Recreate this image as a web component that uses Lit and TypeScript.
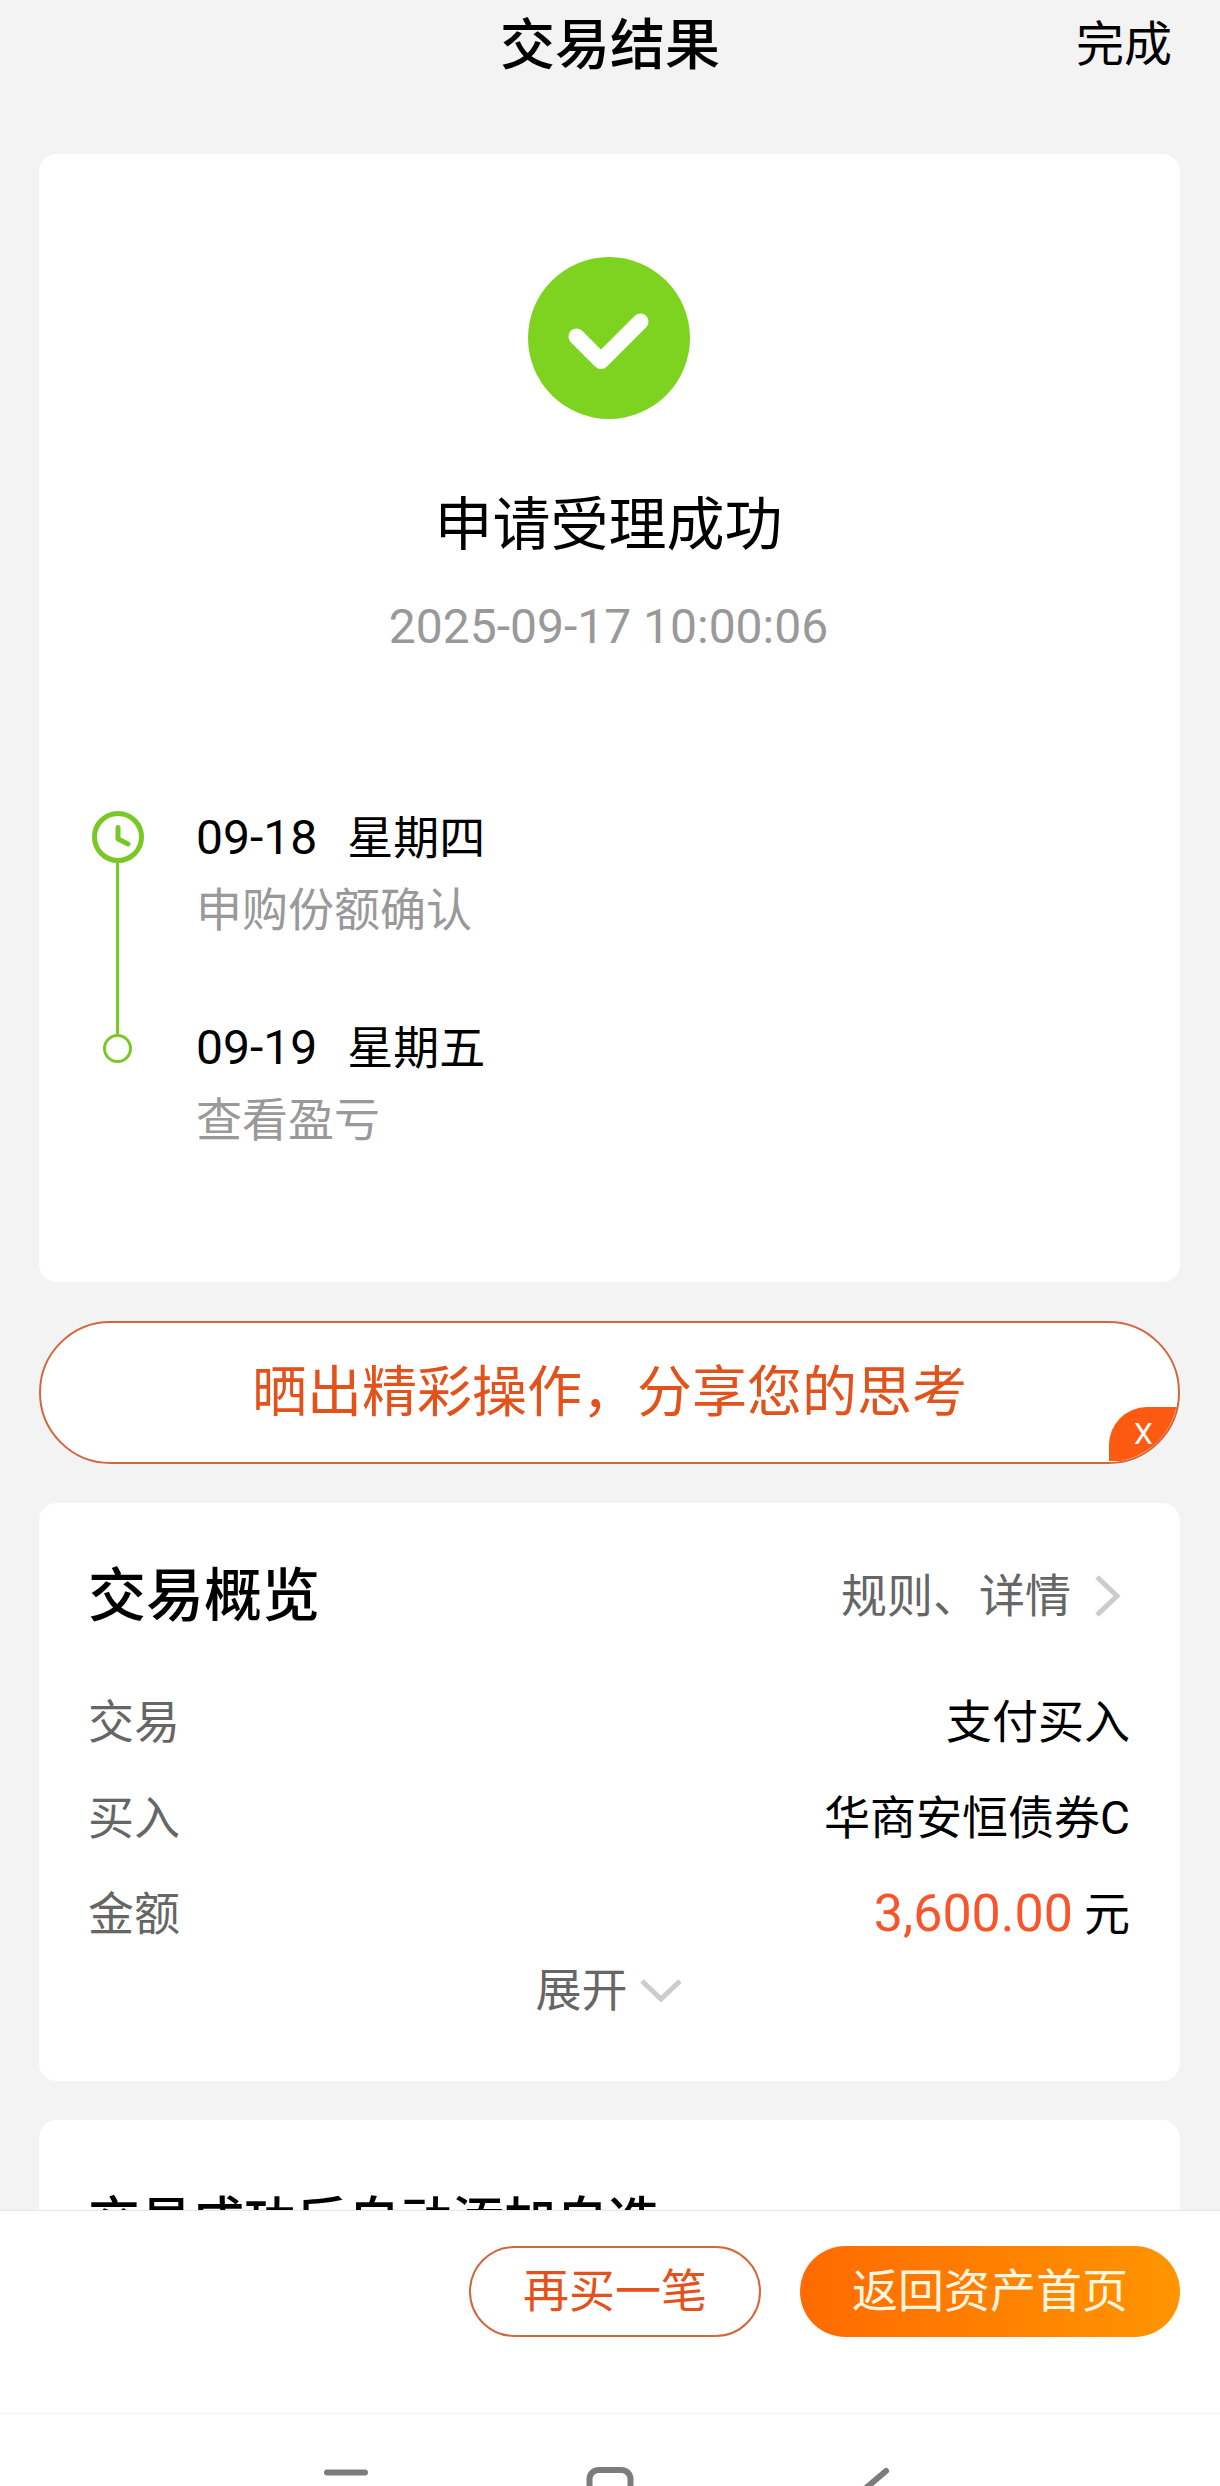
import { LitElement, html, css, svg, nothing } from "lit";
import { customElement, property, state } from "lit/decorators.js";

interface Step {
  date: string;
  weekday: string;
  note: string;
}

const STEPS: Step[] = [
  { date: "09-18", weekday: "星期四", note: "申购份额确认" },
  { date: "09-19", weekday: "星期五", note: "查看盈亏" },
];

const baseStyles = css`
  * {
    box-sizing: border-box;
    margin: 0;
    padding: 0;
  }
  button,
  a {
    font: inherit;
    color: inherit;
    background: none;
    border: none;
    text-decoration: none;
    white-space: nowrap;
    cursor: pointer;
  }
  svg {
    display: block;
    flex: none;
  }
`;

@customElement("progress-timeline")
export class ProgressTimeline extends LitElement {
  @property({ attribute: false }) steps: Step[] = [];

  static styles = [
    baseStyles,
    css`
      :host {
        display: block;
      }
      .list {
        list-style: none;
      }
      .step {
        display: grid;
        grid-template-columns: 57px 1fr;
        column-gap: 50px;
      }
      .rail {
        display: flex;
        flex-direction: column;
        align-items: center;
      }
      .rail.first {
        padding-top: 9px;
      }
      .line {
        flex: 1;
        width: 3px;
        background: #78c826;
      }
      .lead {
        flex: none;
        height: 22px;
        width: 3px;
        background: #78c826;
      }
      .text {
        padding-bottom: 66px;
        line-height: 72px;
      }
      .step:last-child .text {
        padding-bottom: 0;
      }
      .when {
        display: flex;
        gap: 30px;
        color: #000;
      }
      .date {
        font-size: 48px;
      }
      .note {
        color: #999;
      }
    `,
  ];

  private clock() {
    return html`<svg width="52" height="52" viewBox="0 0 52 52" aria-hidden="true">
      <circle cx="26" cy="26" r="23.5" fill="none" stroke="#78c826" stroke-width="5" />
      <path
        d="M26 16.500V28L36 33"
        fill="none"
        stroke="#78c826"
        stroke-width="5"
        stroke-linecap="round"
        stroke-linejoin="round"
      />
    </svg>`;
  }

  private dot() {
    return html`<svg width="29" height="29" viewBox="0 0 29 29" aria-hidden="true">
      <circle cx="14.5" cy="14.5" r="13" fill="none" stroke="#78c826" stroke-width="3" />
    </svg>`;
  }

  render() {
    const last = this.steps.length - 1;
    return html`<ol class="list">
      ${this.steps.map(
        (s, i) => html`<li class="step">
          <div class="rail ${i === 0 ? "first" : ""}">
            ${i === 0 ? this.clock() : html`<span class="lead"></span>${this.dot()}`}
            ${i < last ? html`<span class="line"></span>` : nothing}
          </div>
          <div class="text">
            <p class="when"><span class="date">${s.date}</span><span>${s.weekday}</span></p>
            <p class="note">${s.note}</p>
          </div>
        </li>`
      )}
    </ol>`;
  }
}

@customElement("share-banner")
export class ShareBanner extends LitElement {
  static styles = [
    baseStyles,
    css`
      :host {
        display: block;
      }
      .pill {
        position: relative;
        overflow: hidden;
        border: 2px solid #d0683c;
        border-radius: 72px;
        background: #fff;
      }
      .share {
        display: block;
        width: 100%;
        padding: 33px 72px;
        font-size: 55px;
        line-height: 73px;
        color: #e4521b;
      }
      .close {
        position: absolute;
        right: 0;
        bottom: 1px;
        width: 69px;
        height: 54px;
        border-radius: 38px 0 0 0;
        background: #fb5a10;
        color: #fff;
        font-size: 30px;
        line-height: 54px;
        text-align: center;
      }
    `,
  ];

  render() {
    return html`<div class="pill">
      <button class="share" type="button">晒出精彩操作，分享您的思考</button>
      <button class="close" type="button">X</button>
    </div>`;
  }
}

@customElement("app-root")
export class AppRoot extends LitElement {
  @state() private steps = STEPS;

  static styles = [
    baseStyles,
    css`
      :host {
        display: flex;
        flex-direction: column;
        height: 100vh;
        overflow: hidden;
        background: #f3f3f3;
        color: #000;
        font-family: Roboto, "Noto Sans CJK SC", sans-serif;
        font-size: 46px;
        line-height: 60px;
      }
      .scroll {
        flex: 1;
        min-height: 0;
        overflow-y: auto;
        scrollbar-width: none;
      }
      .header {
        display: grid;
        grid-template-columns: 1fr auto 1fr;
        align-items: center;
        padding: 9px 48px 5px;
      }
      .page-title {
        grid-column: 2;
        font-size: 55px;
        font-weight: 500;
        line-height: 72px;
      }
      .done {
        justify-self: end;
        font-size: 48px;
      }
      .main {
        display: flex;
        flex-direction: column;
        gap: 39px;
        padding: 68px 40px 40px 39px;
      }
      .card {
        border-radius: 18px;
        background: #fff;
      }
      .result {
        display: flex;
        flex-direction: column;
        align-items: center;
        padding: 103px 52px 126px 50px;
      }
      .result-title {
        margin-top: 70px;
        font-size: 58px;
        font-weight: 400;
        line-height: 72px;
      }
      .time {
        margin-top: 36px;
        font-size: 48px;
        color: #999;
      }
      .steps {
        align-self: stretch;
        margin-top: 145px;
      }
      .overview {
        padding: 57px 50px 61px 49px;
      }
      .overview-head {
        display: flex;
        align-items: center;
        justify-content: space-between;
        margin-bottom: 60px;
      }
      .overview-title {
        font-size: 58px;
        font-weight: 500;
        line-height: 72px;
      }
      .rules {
        display: flex;
        align-items: center;
        gap: 22px;
        padding-right: 7px;
        color: #666;
      }
      .facts {
        display: flex;
        flex-direction: column;
        gap: 36px;
      }
      .fact {
        display: flex;
        justify-content: space-between;
      }
      .label {
        color: #666;
      }
      .value {
        display: flex;
        gap: 11px;
      }
      .amount {
        font-size: 52px;
        color: #f9552c;
      }
      .expand {
        display: flex;
        align-items: center;
        gap: 11px;
        margin: 16px auto 0;
        color: #666;
      }
      .watch {
        padding: 67px 49px;
      }
      .watch-title {
        font-size: 52px;
        font-weight: 500;
        line-height: 72px;
      }
      .actions {
        display: flex;
        justify-content: flex-end;
        gap: 39px;
        padding: 35px 40px 76px;
        border-top: 1px solid #e6e6e6;
        background: #fff;
      }
      .action {
        padding: 13px 52px 14px;
        border: 2px solid #d0683c;
        border-radius: 46px;
        color: #e4521b;
      }
      .action.primary {
        padding: 15px 52px 16px;
        border: none;
        background: linear-gradient(90deg, #ff6a00, #ff9500);
        color: #fff6e0;
      }
      .nav {
        display: flex;
        justify-content: center;
        gap: 216px;
        height: 73px;
        padding-top: 52px;
        overflow: hidden;
        border-top: 1px solid #f2f2f2;
        background: #fff;
      }
    `,
  ];

  private navIcon(kind: "menu" | "home" | "back") {
    const shape =
      kind === "menu"
        ? svg`<path d="M5 6.500H43M5 23.500H43M5 40.500H43" />`
        : kind === "home"
          ? svg`<rect x="3.500" y="4" width="41" height="41" rx="9" />`
          : svg`<path d="M36 5L13 24.500L36 44" />`;
    return html`<svg
      width="48"
      height="48"
      viewBox="0 0 48 48"
      fill="none"
      stroke="#7c7c7c"
      stroke-width="6"
      stroke-linecap="round"
      stroke-linejoin="round"
      aria-hidden="true"
    >
      ${shape}
    </svg>`;
  }

  render() {
    return html`
      <div class="scroll">
        <header class="header">
          <h1 class="page-title">交易结果</h1>
          <button class="done" type="button">完成</button>
        </header>
        <main class="main">
          <section class="card result">
            <svg width="162" height="162" viewBox="0 0 162 162" aria-hidden="true">
              <circle cx="81" cy="81" r="81" fill="#7ed321" />
              <path
                d="M48.500 79.500L73 104L112.500 64.500"
                fill="none"
                stroke="#fff"
                stroke-width="16"
                stroke-linecap="round"
                stroke-linejoin="round"
              />
            </svg>
            <h2 class="result-title">申请受理成功</h2>
            <p class="time">2025-09-17 10:00:06</p>
            <progress-timeline class="steps" .steps=${this.steps}></progress-timeline>
          </section>

          <share-banner></share-banner>

          <section class="card overview">
            <div class="overview-head">
              <h2 class="overview-title">交易概览</h2>
              <a class="rules" href="#rules">
                规则、详情
                <svg width="30" height="46" viewBox="0 0 30 46" aria-hidden="true">
                  <path d="M4 4L24 23L4 42" fill="none" stroke="#ccc" stroke-width="5" />
                </svg>
              </a>
            </div>
            <dl class="facts">
              <div class="fact">
                <dt class="label">交易</dt>
                <dd class="value">支付买入</dd>
              </div>
              <div class="fact">
                <dt class="label">买入</dt>
                <dd class="value">华商安恒债券C</dd>
              </div>
              <div class="fact">
                <dt class="label">金额</dt>
                <dd class="value"><span class="amount">3,600.00</span><span>元</span></dd>
              </div>
            </dl>
            <button class="expand" type="button">
              展开
              <svg width="44" height="28" viewBox="0 0 44 28" aria-hidden="true">
                <path d="M3 5L22 23L41 5" fill="none" stroke="#ccc" stroke-width="5" />
              </svg>
            </button>
          </section>

          <section class="card watch">
            <h2 class="watch-title">交易成功后自动添加自选</h2>
          </section>
        </main>
      </div>

      <footer class="actions">
        <button class="action" type="button">再买一笔</button>
        <button class="action primary" type="button">返回资产首页</button>
      </footer>
      <nav class="nav">
        <button type="button" aria-label="菜单">${this.navIcon("menu")}</button>
        <button type="button" aria-label="主屏幕">${this.navIcon("home")}</button>
        <button type="button" aria-label="返回">${this.navIcon("back")}</button>
      </nav>
    `;
  }
}
